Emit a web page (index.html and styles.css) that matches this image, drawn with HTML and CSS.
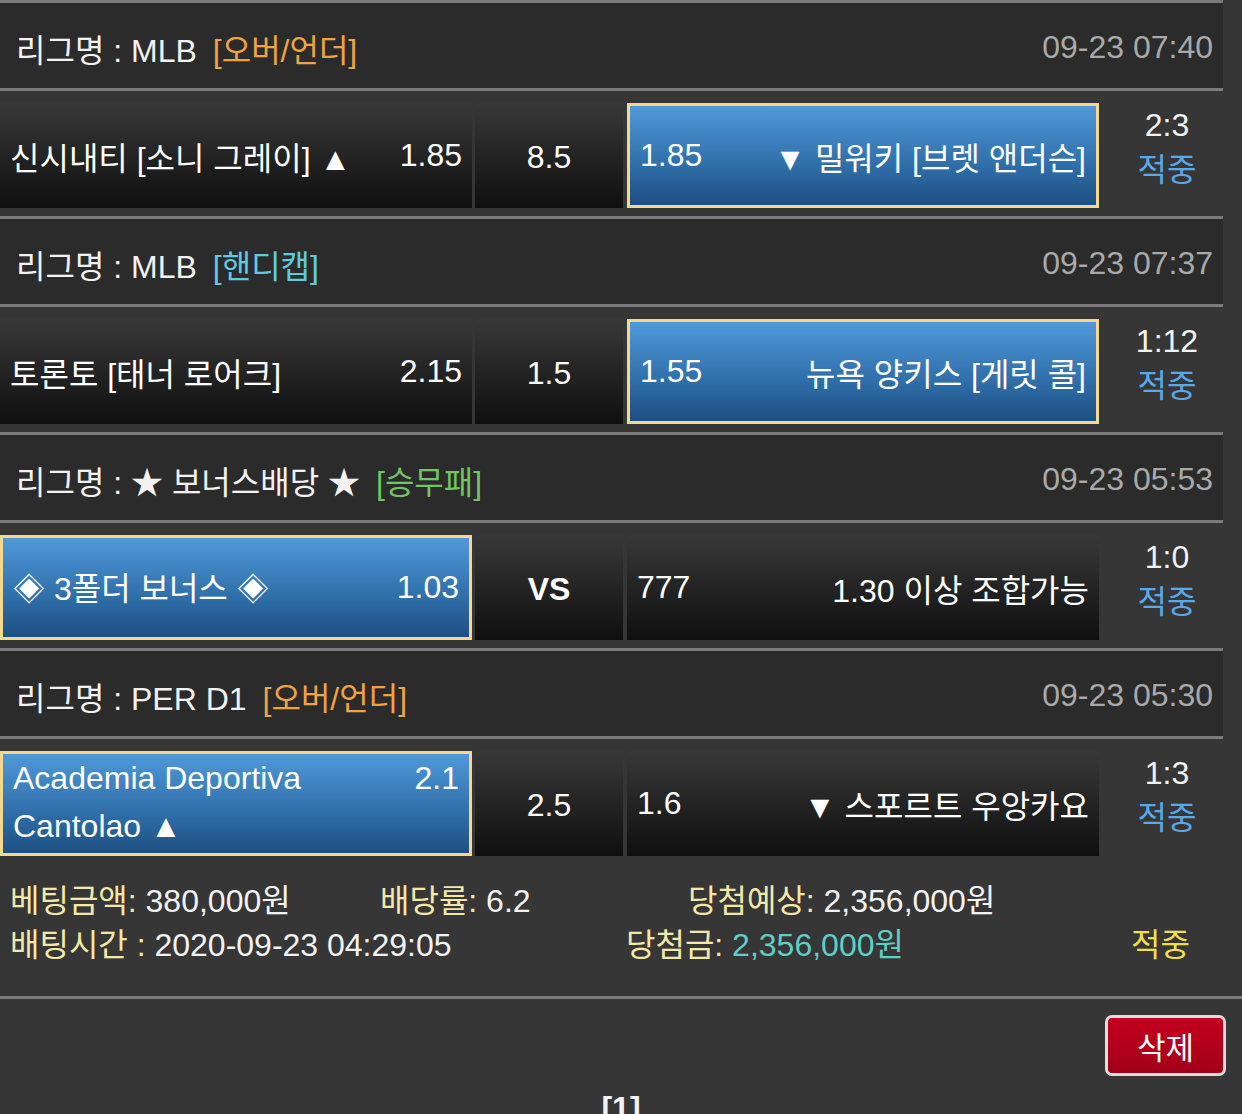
FILE: index.html
```html
<!DOCTYPE html>
<html lang="ko">
<head>
    <meta charset="UTF-8">
    <meta name="viewport" content="width=device-width, initial-scale=1.0">
    <title>배팅내역</title>
    <link rel="stylesheet" href="styles.css">
</head>
<body>
    <div class="bet-list">

        <div class="game">
            <div class="league-head">
                <span class="league-name">리그명 : MLB</span>
                <span class="tag tag-ou">[오버/언더]</span>
                <span class="league-time">09-23 07:40</span>
            </div>
            <div class="game-row">
                <div class="pick pick-home">
                    <span class="team">신시내티 [소니 그레이] ▲</span>
                    <span class="odds">1.85</span>
                </div>
                <div class="pick pick-draw">8.5</div>
                <div class="pick pick-away selected">
                    <span class="odds">1.85</span>
                    <span class="team">▼ 밀워키 [브렛 앤더슨]</span>
                </div>
                <div class="result">
                    <span class="score">2:3</span>
                    <span class="hit">적중</span>
                </div>
            </div>
        </div>

        <div class="game">
            <div class="league-head">
                <span class="league-name">리그명 : MLB</span>
                <span class="tag tag-handi">[핸디캡]</span>
                <span class="league-time">09-23 07:37</span>
            </div>
            <div class="game-row">
                <div class="pick pick-home">
                    <span class="team">토론토 [태너 로어크]</span>
                    <span class="odds">2.15</span>
                </div>
                <div class="pick pick-draw">1.5</div>
                <div class="pick pick-away selected">
                    <span class="odds">1.55</span>
                    <span class="team">뉴욕 양키스 [게릿 콜]</span>
                </div>
                <div class="result">
                    <span class="score">1:12</span>
                    <span class="hit">적중</span>
                </div>
            </div>
        </div>

        <div class="game">
            <div class="league-head">
                <span class="league-name">리그명 : ★ 보너스배당 ★</span>
                <span class="tag tag-wdl">[승무패]</span>
                <span class="league-time">09-23 05:53</span>
            </div>
            <div class="game-row">
                <div class="pick pick-home selected">
                    <span class="team">◈ 3폴더 보너스 ◈</span>
                    <span class="odds">1.03</span>
                </div>
                <div class="pick pick-draw vs">VS</div>
                <div class="pick pick-away">
                    <span class="odds">777</span>
                    <span class="team">1.30 이상 조합가능</span>
                </div>
                <div class="result">
                    <span class="score">1:0</span>
                    <span class="hit">적중</span>
                </div>
            </div>
        </div>

        <div class="game">
            <div class="league-head">
                <span class="league-name">리그명 : PER D1</span>
                <span class="tag tag-ou">[오버/언더]</span>
                <span class="league-time">09-23 05:30</span>
            </div>
            <div class="game-row">
                <div class="pick pick-home selected pick-wrap">
                    <span class="team">Academia Deportiva Cantolao ▲</span>
                    <span class="odds">2.1</span>
                </div>
                <div class="pick pick-draw">2.5</div>
                <div class="pick pick-away">
                    <span class="odds">1.6</span>
                    <span class="team">▼ 스포르트 우앙카요</span>
                </div>
                <div class="result">
                    <span class="score">1:3</span>
                    <span class="hit">적중</span>
                </div>
            </div>
        </div>

        <div class="summary">
            <div class="summary-line">
                <span class="summary-item w-amount"><em>베팅금액:</em> 380,000원</span>
                <span class="summary-item w-rate"><em>배당률:</em> 6.2</span>
                <span class="summary-item"><em>당첨예상:</em> 2,356,000원</span>
            </div>
            <div class="summary-line">
                <span class="summary-item w-time"><em>배팅시간 :</em> 2020-09-23 04:29:05</span>
                <span class="summary-item w-win"><em>당첨금:</em> <b class="win-amount">2,356,000원</b></span>
                <span class="summary-item status">적중</span>
            </div>
        </div>

        <div class="actions">
            <button class="delete-button">삭제</button>
        </div>

        <div class="pager">[1]</div>
    </div>
</body>
</html>
```

FILE: styles.css
```css
body {
    margin: 0;
    background-color: #363636;
    font-family: "Liberation Sans", "Noto Sans CJK KR", sans-serif;
    color: #f2f2f2;
    overflow: hidden;
}

.bet-list {
    width: 1242px;
}

.league-head {
    display: flex;
    align-items: center;
    width: 1197px;
    height: 85px;
    padding: 0 10px 0 16px;
    background-color: #2b2b2b;
    border-top: 3px solid #7b7b7b;
    border-bottom: 3px solid #7b7b7b;
    font-size: 32px;
}

.league-name {
    padding-top: 4px;
}

.tag {
    margin-left: 16px;
    padding-top: 4px;
}

.tag-ou {
    color: #f0a345;
}

.tag-handi {
    color: #5fcbe0;
}

.tag-wdl {
    color: #72c464;
}

.league-time {
    margin-left: auto;
    padding-top: 4px;
    color: #a9a9a9;
}

.game-row {
    display: flex;
    padding: 12px 0 8px;
}

.pick {
    display: flex;
    align-items: center;
    justify-content: space-between;
    height: 105px;
    box-sizing: border-box;
    padding: 0 10px;
    background: linear-gradient(#383838, #0f0f0f);
    font-size: 32px;
    color: #ffffff;
}

.pick-home {
    width: 472px;
}

.pick-draw {
    width: 148px;
    margin-left: 3px;
    justify-content: center;
    padding-top: 4px;
}

.pick-away {
    width: 472px;
    margin-left: 4px;
}

.pick.selected {
    border: 3px solid #f4d88f;
    background: linear-gradient(#4f99d9, #2f6ea9 60%, #1e4f82);
}

.pick-wrap {
    align-items: flex-start;
    line-height: 48px;
}

.pick-wrap .team {
    max-width: 340px;
}

.vs {
    font-weight: bold;
}

.result {
    display: flex;
    flex-direction: column;
    align-items: center;
    flex: 1;
    padding-right: 7px;
    font-size: 32px;
    line-height: 45px;
}

.hit {
    color: #5aa9e6;
}

.summary {
    padding: 15px 0 29px;
    border-bottom: 3px solid #7b7b7b;
    font-size: 32px;
}

.summary-line {
    display: flex;
    height: 44px;
    line-height: 44px;
    padding-left: 10px;
}

.summary em {
    font-style: normal;
    color: #f4e8a8;
}

.w-amount {
    width: 370px;
}

.w-rate {
    width: 308px;
}

.w-time {
    width: 616px;
}

.w-win {
    width: 505px;
}

.win-amount {
    font-weight: normal;
    color: #5fcfc4;
}

.status {
    color: #efdf4a;
}

.actions {
    display: flex;
    justify-content: flex-end;
    padding: 16px 16px 0;
}

.delete-button {
    width: 121px;
    height: 61px;
    border: 3px solid #e2dcdc;
    border-radius: 7px;
    background: linear-gradient(#c4001f, #a20019);
    color: #ffffff;
    font-family: "Liberation Sans", "Noto Sans CJK KR", sans-serif;
    font-size: 31px;
}

.pager {
    margin-top: 14px;
    text-align: center;
    font-size: 32px;
    font-weight: bold;
}
```
